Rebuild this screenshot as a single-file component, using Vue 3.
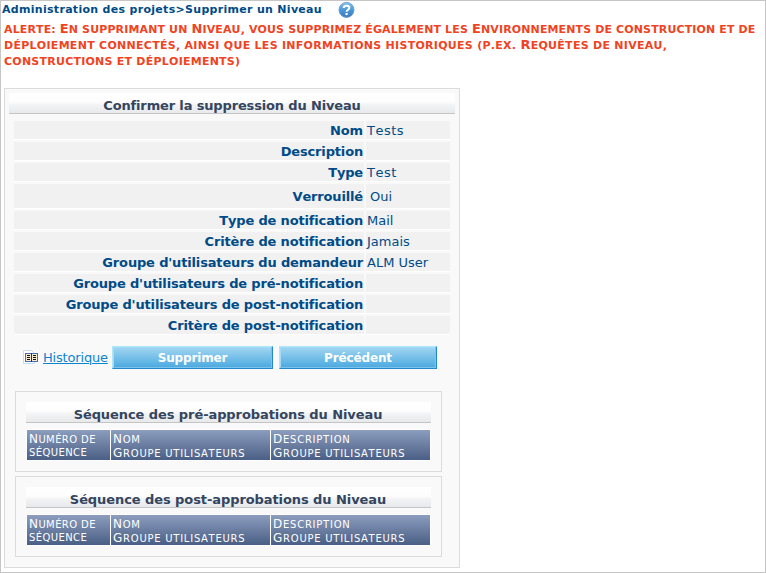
<script setup>
const alertLines = [
  'alerte: En supprimant un Niveau, vous supprimez également les Environnements de construction et de',
  'déploiement connectés, ainsi que les informations historiques (p.ex. Requêtes de niveau,',
  'constructions et déploiements)',
]

const fields = [
  { label: 'Nom', value: 'Tests', wide: true },
  { label: 'Description', value: '' },
  { label: 'Type', value: 'Test', wide: true },
  { label: 'Verrouillé', value: 'Oui', tall: true },
  { label: 'Type de notification', value: 'Mail' },
  { label: 'Critère de notification', value: 'Jamais' },
  { label: "Groupe d'utilisateurs du demandeur", value: 'ALM User' },
  { label: "Groupe d'utilisateurs de pré-notification", value: '' },
  { label: "Groupe d'utilisateurs de post-notification", value: '' },
  { label: 'Critère de post-notification', value: '' },
]

const sequences = ['Séquence des pré-approbations du Niveau', 'Séquence des post-approbations du Niveau']
const columns = [
  ['Numéro de', 'séquence'],
  ['Nom', 'Groupe utilisateurs'],
  ['Description', 'Groupe utilisateurs'],
]

// Splits a text into capitals and lowercase runs for the small-caps style.
const runs = (text) =>
  text.match(/\p{Lu}+|[^\p{Lu}]+/gu).map((t) => ({ t, small: !/\p{Lu}/u.test(t) }))
</script>

<template>
  <main class="page">
    <header class="crumbs">
      <span class="crumb-text">Administration des projets&gt;Supprimer un Niveau</span>
      <svg class="help" width="17" height="17" viewBox="0 0 17 17">
        <defs>
          <linearGradient id="ball" x1="0" y1="0" x2="0" y2="1">
            <stop offset="0" stop-color="#8fc4ec" />
            <stop offset=".5" stop-color="#4a98da" />
            <stop offset="1" stop-color="#3a78ba" />
          </linearGradient>
        </defs>
        <circle cx="8.5" cy="8.9" r="7.5" fill="url(#ball)" stroke="#6a9aca" stroke-width=".9" />
        <path d="M5.7 7C5.8 3.9 11.3 3.9 11.3 6.8C11.3 8.7 8.6 8.7 8.6 10.8" fill="none" stroke="#fff" stroke-width="2" />
        <rect x="7.5" y="12" width="2.2" height="2.1" fill="#fff" />
      </svg>
    </header>

    <div class="alert">
      <div v-for="(line, i) in alertLines" :key="i" :class="['alert-line', 'line-' + i]">
        <span v-for="(r, k) in runs(line)" :key="k" :class="{ small: r.small }">{{ r.t }}</span>
      </div>
    </div>

    <section class="panel">
      <h2 class="bar">Confirmer la suppression du Niveau</h2>
      <div class="fields">
        <div v-for="f in fields" :key="f.label" :class="['row', { tall: f.tall }]">
          <div class="label">{{ f.label }}</div>
          <div :class="['value', { wide: f.wide }]">{{ f.value }}</div>
        </div>
      </div>

      <div class="actions">
        <svg class="book" width="16" height="15" viewBox="0 0 16 15">
          <path d="M.5 .5H8.5L11.5 3.5V13.5H.5Z" fill="#fff" stroke="#c5dff0" />
          <rect x="2.5" y="3.5" width="12" height="8" fill="#f4ead2" stroke="#4a6fb0" />
          <path d="M8.5 3V12" stroke="#333" />
          <path d="M4 5.5H7M4 7.5H7M4 9.5H7M10 5.5H13M10 7.5H13M10 9.5H13" stroke="#111" />
        </svg>
        <a class="history">Historique</a>
        <button class="btn first">Supprimer</button>
        <button class="btn second">Précédent</button>
      </div>

      <section v-for="s in sequences" :key="s" class="box">
        <h2 class="bar">{{ s }}</h2>
        <div class="heads">
          <div v-for="(c, i) in columns" :key="i" :class="['head', { narrow: i === 0 }]">
            <div v-for="line in c" :key="line" class="head-line">
              <span v-for="(r, k) in runs(line)" :key="k" :class="{ small: r.small }">{{ r.t }}</span>
            </div>
          </div>
        </div>
      </section>
    </section>
  </main>
</template>

<style>
body {
  background: #fff;
}
</style>

<style scoped>
* {
  box-sizing: border-box;
}
.page {
  width: 766px;
  height: 573px;
  border: 1px solid #c6c6c6;
  font-family: Verdana, "DejaVu Sans", sans-serif;
  font-size: 13px;
  font-kerning: none;
  color: #004b87;
  overflow: hidden;
}
.crumbs {
  display: flex;
  height: 19px;
  padding-left: 1px;
}
.crumb-text {
  width: 336px;
  font-size: 11px;
  font-weight: bold;
  letter-spacing: 0.3px;
  line-height: 17px;
  white-space: nowrap;
}
.help {
  flex: none;
}
.alert {
  height: 68px;
  padding-left: 3px;
  color: #f0431f;
  font-weight: bold;
  font-size: 13px;
}
.alert-line {
  height: 16px;
  line-height: 18px;
  white-space: pre;
}
.line-0 {
  letter-spacing: 0.13px;
}
.line-1 {
  letter-spacing: 0.28px;
}
.line-2 {
  letter-spacing: 0.24px;
}
.alert-line .small {
  font-size: 11px;
  text-transform: uppercase;
}
.panel {
  width: 456px;
  height: 480px;
  margin-left: 3px;
  padding: 4px;
  border: 1px solid #dcdcdc;
  background: #f9f9f9;
}
.bar {
  height: 21px;
  margin: 0;
  border-bottom: 1px solid #c4c4c4;
  background: linear-gradient(#fff 0%, #fdfdfd 45%, #f2f3f4 60%, #e8e9ea 100%);
  color: #34455f;
  font-size: 13px;
  font-weight: bold;
  letter-spacing: -0.15px;
  line-height: 25px;
  text-align: center;
  white-space: nowrap;
}
.fields {
  display: flex;
  flex-direction: column;
  gap: 2px;
  padding: 7px 5px 0;
}
.row {
  display: grid;
  grid-template: 100% / 350px 84px;
  gap: 2px;
  height: 19px;
  line-height: 20px;
  white-space: nowrap;
}
.label,
.value {
  background: #f1f1f1;
  border-bottom: 1px solid #fff;
}
.label {
  padding-right: 1px;
  font-weight: bold;
  letter-spacing: -0.16px;
  text-align: right;
}
.value {
  padding-left: 1px;
}
.wide {
  letter-spacing: 0.5px;
}
.tall {
  height: 25px;
  line-height: 26px;
}
.tall .value {
  padding-left: 4px;
}
.actions {
  display: flex;
  height: 23px;
  margin-top: 11px;
  padding-left: 14px;
}
.book {
  flex: none;
  margin-top: 4px;
}
.history {
  width: 69px;
  margin-left: 4px;
  letter-spacing: -0.18px;
  line-height: 23px;
  color: #0b84d0;
  text-decoration: underline;
}
.btn {
  height: 23px;
  padding: 0;
  border: 1px solid #2389cd;
  border-top-color: #b0e4fb;
  border-left-color: #b0e4fb;
  background: linear-gradient(#a2d6f2, #4aa9df);
  box-shadow: inset -1px -1px #7cc3ec, inset 1px 1px #a4dcf7;
  color: #fff;
  font: bold 12px Verdana, "DejaVu Sans", sans-serif;
  letter-spacing: -0.15px;
}
.first {
  width: 161px;
}
.second {
  width: 158px;
  margin-left: 6px;
}
.box {
  width: 427px;
  height: 81px;
  margin: 4px 0 0 6px;
  padding: 10px;
  border: 1px solid #dcdcdc;
}
.actions + .box {
  margin-top: 22px;
}
.box .bar {
  width: 405px;
  padding-right: 1px;
  letter-spacing: -0.08px;
}
.heads {
  display: grid;
  grid-template-columns: 83px 159px 159px;
  gap: 1px;
  width: 405px;
  height: 32px;
  margin-top: 6px;
  padding: 1px;
  background: #fff;
}
.head {
  padding: 2px 0 0 2px;
  background: linear-gradient(#8c9dbe, #4a5f85);
  color: #fff;
  font-size: 12px;
  letter-spacing: 0.75px;
  white-space: nowrap;
}
.narrow {
  padding-top: 3px;
  letter-spacing: 0.4px;
}
.head-line {
  height: 14px;
  line-height: 14px;
}
.narrow .head-line {
  height: 13px;
  line-height: 13px;
}
.head .small {
  font-size: 10px;
  text-transform: uppercase;
}
</style>
